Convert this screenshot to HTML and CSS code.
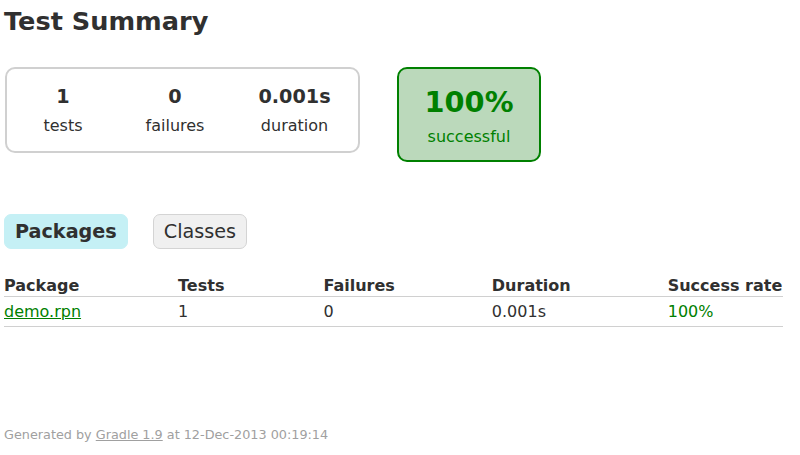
FILE: index.html
```html
<!DOCTYPE html>
<html>
<head>
<meta charset="utf-8">
<title>Test results - Test Summary</title>
<link rel="stylesheet" href="styles.css">
</head>
<body>
<div class="content">
  <h1 class="title">Test Summary</h1>
  <div class="summary">
    <div class="summary-group">
      <div class="info-box">
        <div class="counter">1</div>
        <p class="label">tests</p>
      </div>
      <div class="info-box">
        <div class="counter">0</div>
        <p class="label">failures</p>
      </div>
      <div class="info-box info-box-duration">
        <div class="counter">0.001s</div>
        <p class="label">duration</p>
      </div>
    </div>
    <div class="info-box success-rate success">
      <div class="percent">100%</div>
      <p class="label">successful</p>
    </div>
  </div>
  <ul class="tab-links">
    <li class="tab-link selected"><span class="tab-title-selected">Packages</span></li>
    <li class="tab-link"><span class="tab-title">Classes</span></li>
  </ul>
  <div class="tab">
    <table class="results">
      <thead>
        <tr>
          <th>Package</th>
          <th class="col-tests">Tests</th>
          <th>Failures</th>
          <th>Duration</th>
          <th>Success rate</th>
        </tr>
      </thead>
      <tbody>
        <tr>
          <td class="success"><a class="success-link" href="#">demo.rpn</a></td>
          <td class="col-tests">1</td>
          <td>0</td>
          <td>0.001s</td>
          <td class="success">100%</td>
        </tr>
      </tbody>
    </table>
  </div>
  <div class="footer">
    Generated by <a class="footer-link" href="#">Gradle 1.9</a> at 12-Dec-2013 00:19:14
  </div>
</div>
</body>
</html>
```

FILE: styles.css
```css
html, body {
  margin: 0;
  padding: 0;
  background: #ffffff;
}

body {
  font-family: "DejaVu Sans", sans-serif;
  font-size: 16px;
  color: #303030;
}

.content {
  padding: 6px 4px 30px 4px;
}

.title {
  font-size: 25.6px;
  font-weight: bold;
  margin: 0;
  white-space: nowrap;
}

.summary {
  display: flex;
  align-items: flex-start;
  margin-top: 31px;
  padding-left: 1px;
}

.summary-group {
  display: flex;
  border: solid 2px #d0d0d0;
  border-radius: 10px;
}

.info-box {
  width: 110px;
  padding: 16px 1px;
  text-align: center;
}

.info-box-duration {
  width: 125px;
}

.label {
  margin: 0;
}

.counter, .percent {
  font-size: 19.2px;
  font-weight: bold;
  margin-bottom: 8px;
}

.success-rate {
  width: 140px;
  padding: 16px 0 14px 0;
  margin-left: 37px;
  border: solid 2px #008000;
  border-radius: 10px;
  background-color: #bbd9bb;
}

.success-rate .percent {
  font-size: 28.8px;
}

.success {
  color: #008000;
}

.tab-links {
  display: flex;
  list-style: none;
  margin: 52px 0 16px 0;
  padding: 0;
}

.tab-link {
  padding: 5px 10px;
  margin-right: 25px;
  border: solid 1px #d4d4d4;
  border-radius: 7px;
  background-color: #f0f0f0;
  font-size: 19.2px;
}

.tab-link.selected {
  background-color: #c5f0f5;
  border-color: #c5f0f5;
}

.tab-title-selected {
  font-weight: bold;
}

.results {
  border-collapse: collapse;
  border-bottom: solid 1px #d0d0d0;
  margin-top: 26px;
}

.results th {
  text-align: left;
  white-space: nowrap;
  padding: 1px 1px 1px 96px;
  border-bottom: solid 1px #d0d0d0;
}

.results td {
  white-space: nowrap;
  padding: 5px 1px 5px 96px;
}

.results th:first-child,
.results td:first-child {
  padding-left: 0;
}

.results .col-tests {
  padding-right: 3px;
}

.success-link {
  color: #008000;
  text-decoration: underline;
}

.footer {
  margin-top: 100px;
  font-size: 12.8px;
  color: #a0a0a0;
  white-space: nowrap;
}

.footer-link {
  color: #a0a0a0;
  text-decoration: underline;
}
```
